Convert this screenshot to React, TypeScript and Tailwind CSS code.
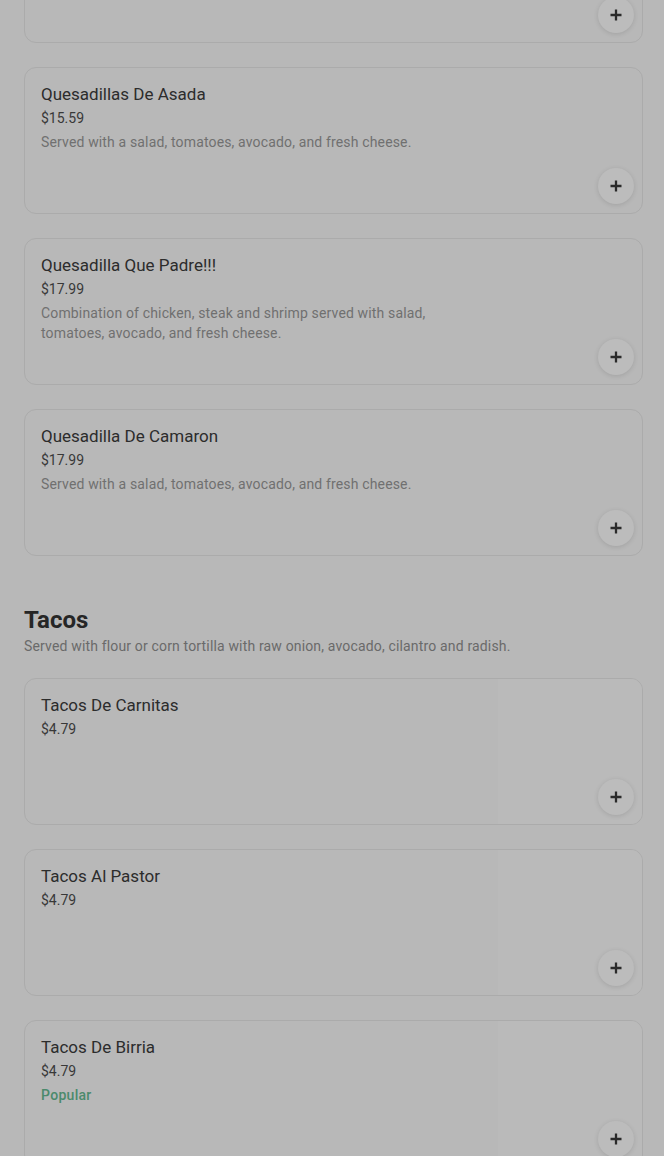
import React from "react";

type Item = { name: string; price: string; desc?: string; popular?: boolean; image?: boolean; empty?: boolean };

const quesadillas: Item[] = [
  { name: "", price: "", empty: true },
  { name: "Quesadillas De Asada", price: "$15.59", desc: "Served with a salad, tomatoes, avocado, and fresh cheese." },
  {
    name: "Quesadilla Que Padre!!!",
    price: "$17.99",
    desc: "Combination of chicken, steak and shrimp served with salad, tomatoes, avocado, and fresh cheese.",
  },
  { name: "Quesadilla De Camaron", price: "$17.99", desc: "Served with a salad, tomatoes, avocado, and fresh cheese." },
];

const tacos: Item[] = [
  { name: "Tacos De Carnitas", price: "$4.79", image: true },
  { name: "Tacos Al Pastor", price: "$4.79", image: true },
  { name: "Tacos De Birria", price: "$4.79", popular: true, image: true },
];

function Plus() {
  return (
    <svg width="12" height="12" viewBox="0 0 12 12" fill="none">
      <path d="M6 0.5v11M0.5 6h11" stroke="#2a2a2a" strokeWidth="2.3" />
    </svg>
  );
}

function Card({ item }: { item: Item }) {
  return (
    <div className="relative h-[147px] rounded-[12px] border border-[#ababab] bg-[#b8b8b8] overflow-hidden">
      {item.image && <div className="absolute right-0 top-0 bottom-0 w-[144px] bg-[#bababa]" />}
      {!item.empty && (
        <div className="relative flex flex-col gap-1 px-4 pt-4 pr-[200px]">
          <div className="text-[17px] leading-5 font-normal text-[#2c2c2c] whitespace-nowrap">{item.name}</div>
          <div className="text-[14px] leading-5 text-[#383838]">{item.price}</div>
          {item.desc ? (
            <div className="text-[14px] leading-5 tracking-[0.15px] text-[#707070] max-w-[400px]">{item.desc}</div>
          ) : null}
          {item.popular ? (
            <div className="text-[14px] leading-5 font-medium tracking-[0.3px] text-[#4b8a6c]">Popular</div>
          ) : null}
        </div>
      )}
      <button className="absolute right-2 bottom-[9px] flex h-9 w-9 items-center justify-center rounded-full bg-[#bcbcbc] shadow-[0_1px_5px_rgba(0,0,0,0.12)]">
        <Plus />
      </button>
    </div>
  );
}

export default function App() {
  return (
    <div
      className="min-h-[1156px] w-[664px] overflow-hidden bg-[#b8b8b8]"
      style={{ fontFamily: "Roboto, 'Liberation Sans', sans-serif" }}
    >
      <div className="pl-6 pr-[21px] mt-[-104px] flex flex-col">
        <div className="flex flex-col gap-6">
          {quesadillas.map((q, i) => (
            <Card key={i} item={q} />
          ))}
        </div>
        <div className="mt-[48px]">
          <h2 className="text-[24px] leading-8 font-bold text-[#262626]">Tacos</h2>
          <p className="text-[14px] leading-5 tracking-[0.16px] text-[#6a6a6a]">
            Served with flour or corn tortilla with raw onion, avocado, cilantro and radish.
          </p>
        </div>
        <div className="mt-[22px] flex flex-col gap-6">
          {tacos.map((t) => (
            <Card key={t.name} item={t} />
          ))}
        </div>
      </div>
    </div>
  );
}
